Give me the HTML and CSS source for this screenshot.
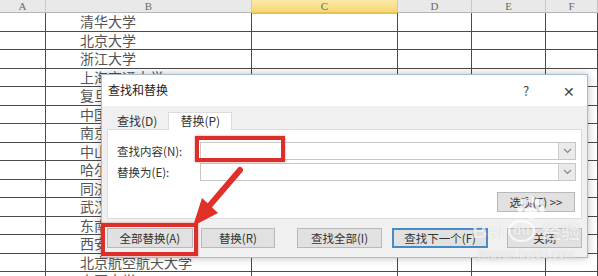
FILE: index.html
```html
<!DOCTYPE html>
<html lang="zh-CN">
<head>
  <meta charset="UTF-8">
  <title>查找和替换</title>
  <link rel="stylesheet" href="styles.css">
</head>
<body>

  <!-- 表格 -->
  <div class="sheet">
    <div class="row head">
      <div class="c">A</div><div class="c">B</div><div class="c sel">C</div><div class="c">D</div><div class="c">E</div><div class="c">F</div>
    </div>
    <div class="row"><div class="c"></div><div class="c name">清华大学</div><div class="c"></div><div class="c"></div><div class="c"></div><div class="c"></div></div>
    <div class="row"><div class="c"></div><div class="c name">北京大学</div><div class="c"></div><div class="c"></div><div class="c"></div><div class="c"></div></div>
    <div class="row"><div class="c"></div><div class="c name">浙江大学</div><div class="c"></div><div class="c"></div><div class="c"></div><div class="c"></div></div>
    <div class="row"><div class="c"></div><div class="c name">上海交通大学</div><div class="c"></div><div class="c"></div><div class="c"></div><div class="c"></div></div>
    <div class="row"><div class="c"></div><div class="c name">复旦大学</div><div class="c"></div><div class="c"></div><div class="c"></div><div class="c"></div></div>
    <div class="row"><div class="c"></div><div class="c name">中国科学技术大学</div><div class="c"></div><div class="c"></div><div class="c"></div><div class="c"></div></div>
    <div class="row"><div class="c"></div><div class="c name">南京大学</div><div class="c"></div><div class="c"></div><div class="c"></div><div class="c"></div></div>
    <div class="row"><div class="c"></div><div class="c name">中山大学</div><div class="c"></div><div class="c"></div><div class="c"></div><div class="c"></div></div>
    <div class="row"><div class="c"></div><div class="c name">哈尔滨工业大学</div><div class="c"></div><div class="c"></div><div class="c"></div><div class="c"></div></div>
    <div class="row"><div class="c"></div><div class="c name">同济大学</div><div class="c"></div><div class="c"></div><div class="c"></div><div class="c"></div></div>
    <div class="row"><div class="c"></div><div class="c name">武汉大学</div><div class="c"></div><div class="c"></div><div class="c"></div><div class="c"></div></div>
    <div class="row"><div class="c"></div><div class="c name">东南大学</div><div class="c"></div><div class="c"></div><div class="c"></div><div class="c"></div></div>
    <div class="row"><div class="c"></div><div class="c name">西安交通大学</div><div class="c"></div><div class="c"></div><div class="c"></div><div class="c"></div></div>
    <div class="row"><div class="c"></div><div class="c name">北京航空航天大学</div><div class="c"></div><div class="c"></div><div class="c"></div><div class="c"></div></div>
    <div class="row"><div class="c"></div><div class="c name">南开大学</div><div class="c"></div><div class="c"></div><div class="c"></div><div class="c"></div></div>
  </div>

  <!-- 查找和替换 对话框 -->
  <div class="dialog">
    <div class="titlebar">
      <span class="title">查找和替换</span>
      <span class="help">?</span>
      <span class="close">✕</span>
    </div>
    <div class="dlg-body">
      <div class="tabs">
        <div class="tab">查找(D)</div>
        <div class="tab on">替换(P)</div>
      </div>
      <div class="panel">
        <div class="field">
          <span class="label">查找内容(N):</span>
          <div class="combo"><span class="drop"><svg width="9" height="6" viewBox="0 0 9 6"><path d="M1 1l3.5 3.5L8 1" fill="none" stroke="#888" stroke-width="1.2"/></svg></span></div>
        </div>
        <div class="field">
          <span class="label">替换为(E):</span>
          <div class="combo"><span class="drop"><svg width="9" height="6" viewBox="0 0 9 6"><path d="M1 1l3.5 3.5L8 1" fill="none" stroke="#888" stroke-width="1.2"/></svg></span></div>
        </div>
        <div class="opts">
          <button class="btn options">选项(T) &gt;&gt;</button>
        </div>
      </div>
      <div class="actions">
        <button class="btn all">全部替换(A)</button>
        <button class="btn one">替换(R)</button>
        <button class="btn findall">查找全部(I)</button>
        <button class="btn next">查找下一个(F)</button>
        <button class="btn shut">关闭</button>
      </div>
    </div>

    <!-- 红框标注 -->
    <div class="mark mark-find"></div>
    <div class="mark mark-all"></div>
  </div>

  <!-- 红色箭头 -->
  <svg class="arrow" width="598" height="276" viewBox="0 0 598 276">
    <line x1="240" y1="170" x2="209.5" y2="205.6" stroke="#e0302a" stroke-width="6" stroke-linecap="round"/>
    <polygon points="193,226 218,213 202,198" fill="#e0302a"/>
  </svg>

  <!-- 水印 -->
  <div class="watermark">
    <svg class="paw" width="30" height="26" viewBox="0 0 30 26">
      <circle cx="8" cy="6" r="3.5"/><circle cx="15" cy="3.5" r="3.5"/><circle cx="22" cy="6" r="3.5"/>
      <circle cx="4" cy="13" r="3"/><circle cx="26" cy="13" r="3"/>
      <ellipse cx="15" cy="17" rx="7" ry="6"/>
    </svg>
    <div class="wm-main"><span>Bai</span><span class="du">du</span><span class="jy">经验</span></div>
    <div class="wm-url">jingyan.baidu.com</div>
  </div>

</body>
</html>
```

FILE: styles.css
```css
* { margin: 0; padding: 0; box-sizing: border-box; }
html, body {
  width: 598px;
  height: 276px;
  overflow: hidden;
  background: #fff;
  font-family: "Noto Sans CJK SC", "Liberation Sans", sans-serif;
  color: #333;
}
body { position: relative; }

/* 表格 */
.sheet {
  height: 276px;
  overflow: hidden;
  display: flex;
  flex-direction: column;
}
.row {
  display: grid;
  grid-template-columns: 46px 206px 146px 74px 74px 52px;
  height: 18.5px;
  flex-shrink: 0;
  border-bottom: 1px solid #4a4a4a;
}
.row .c {
  border-right: 1px solid #4a4a4a;
  white-space: nowrap;
}
.row.head {
  height: 13px;
  background: #e9e9e9;
  border-bottom: 1px solid #b5b5b5;
}
.row.head .c {
  border-right: 1px solid #c8c8c8;
  text-align: center;
  font-family: "Liberation Serif", serif;
  font-size: 11px;
  line-height: 12px;
  color: #6a6a6a;
}
.row.head .sel {
  background: linear-gradient(#fbe9a8, #f6d776);
  border-bottom: 2px solid #f0c14a;
}
.name {
  padding-left: 34px;
  font-size: 14px;
  line-height: 17px;
  color: #555;
}

/* 对话框 */
.dialog {
  position: absolute;
  left: 101px;
  top: 74px;
  width: 487px;
  height: 184px;
  background: #f0f0f0;
  border: 1px solid #a9bccd;
  box-shadow: 0 0 8px rgba(0,0,0,0.25);
  font-size: 12px;
  color: #222;
  display: flex;
  flex-direction: column;
}
.titlebar {
  height: 31px;
  background: #fff;
  display: flex;
  align-items: center;
  padding-left: 6px;
}
.title { flex: 1; font-size: 12px; line-height: 14px; margin-top: -2px; }
.help { width: 50px; text-align: center; font-size: 13px; line-height: 14px; color: #444; }
.close { width: 36px; text-align: center; font-size: 14px; line-height: 14px; color: #444; }

.dlg-body {
  flex: 1;
  padding: 6px 5px 0 5px;
  display: flex;
  flex-direction: column;
}
.tabs {
  display: flex;
  align-items: flex-end;
  height: 17px;
  padding-left: 1px;
}
.tab {
  height: 15px;
  padding: 0 9px;
  line-height: 14px;
  font-size: 12px;
  color: #333;
}
.tab.on {
  height: 18px;
  margin-left: 2px;
  background: #fff;
  border: 1px solid #dcdcdc;
  border-bottom: none;
  padding: 0 11px;
  line-height: 16px;
  position: relative;
  top: 1px;
}
.panel {
  height: 90px;
  background: #fff;
  border: 1px solid #dcdcdc;
  padding: 12px 5px 0 9px;
  display: flex;
  flex-direction: column;
  gap: 3px;
}
.field {
  display: flex;
  align-items: center;
  height: 18px;
}
.label { width: 83px; font-size: 11.5px; line-height: 14px; color: #333; }
.combo {
  flex: 1;
  height: 18px;
  border: 1px solid #c7c7c7;
  background: #fff;
  display: flex;
  justify-content: flex-end;
}
.drop {
  width: 17px;
  height: 16px;
  background: #eaeaea;
  border-left: 1px solid #d0d0d0;
  display: flex;
  align-items: center;
  justify-content: center;
}
.opts {
  display: flex;
  justify-content: flex-end;
  margin-top: 8px;
  padding-right: 1px;
}
.btn {
  height: 20px;
  background: #e1e1e1;
  border: 1px solid #b8b8b8;
  font-family: "Noto Sans CJK SC", "Liberation Sans", sans-serif;
  font-size: 11.5px;
  line-height: 14px;
  color: #333;
}
.options { width: 78px; }

.actions {
  display: flex;
  margin-top: 9px;
}
.all { width: 86px; }
.one { width: 75px; margin-left: 8px; }
.findall { width: 85px; margin-left: 22px; }
.next { width: 97px; margin-left: 10px; border: 2px solid #4a8ac4; }
.shut { width: 75px; margin-left: 19px; }

/* 红框 */
.mark {
  position: absolute;
  border: 4px solid #dc2f29;
  box-shadow: 0 0 2px rgba(220,47,41,0.6);
}
.mark-find { left: 93px; top: 61px; width: 90px; height: 26px; }
.mark-all { left: -1px; top: 148px; width: 97px; height: 33px; }

.arrow {
  position: absolute;
  left: 0;
  top: 0;
  pointer-events: none;
}

/* 水印 */
.watermark {
  position: absolute;
  left: 456px;
  top: 196px;
  width: 140px;
  color: rgba(255,255,255,0.75);
  text-shadow: 0 0 1px rgba(0,0,0,0.18);
  text-align: center;
}
.paw {
  position: absolute;
  left: 60px;
  top: 0;
  fill: rgba(255,255,255,0.75);
}
.wm-main {
  margin-top: 24px;
  font-family: "Liberation Sans", sans-serif;
  font-size: 21px;
  font-weight: bold;
  line-height: 22px;
  display: flex;
  justify-content: center;
  gap: 3px;
}
.wm-main .du {
  font-size: 14px;
  border: 2px solid rgba(255,255,255,0.75);
  border-radius: 50%;
  padding: 0 3px;
  line-height: 17px;
}
.wm-main .jy {
  font-family: "Noto Sans CJK SC", sans-serif;
  font-size: 19px;
  margin-left: 4px;
}
.wm-url {
  font-family: "Liberation Sans", sans-serif;
  font-size: 12px;
  line-height: 16px;
  margin-top: 4px;
}
```
